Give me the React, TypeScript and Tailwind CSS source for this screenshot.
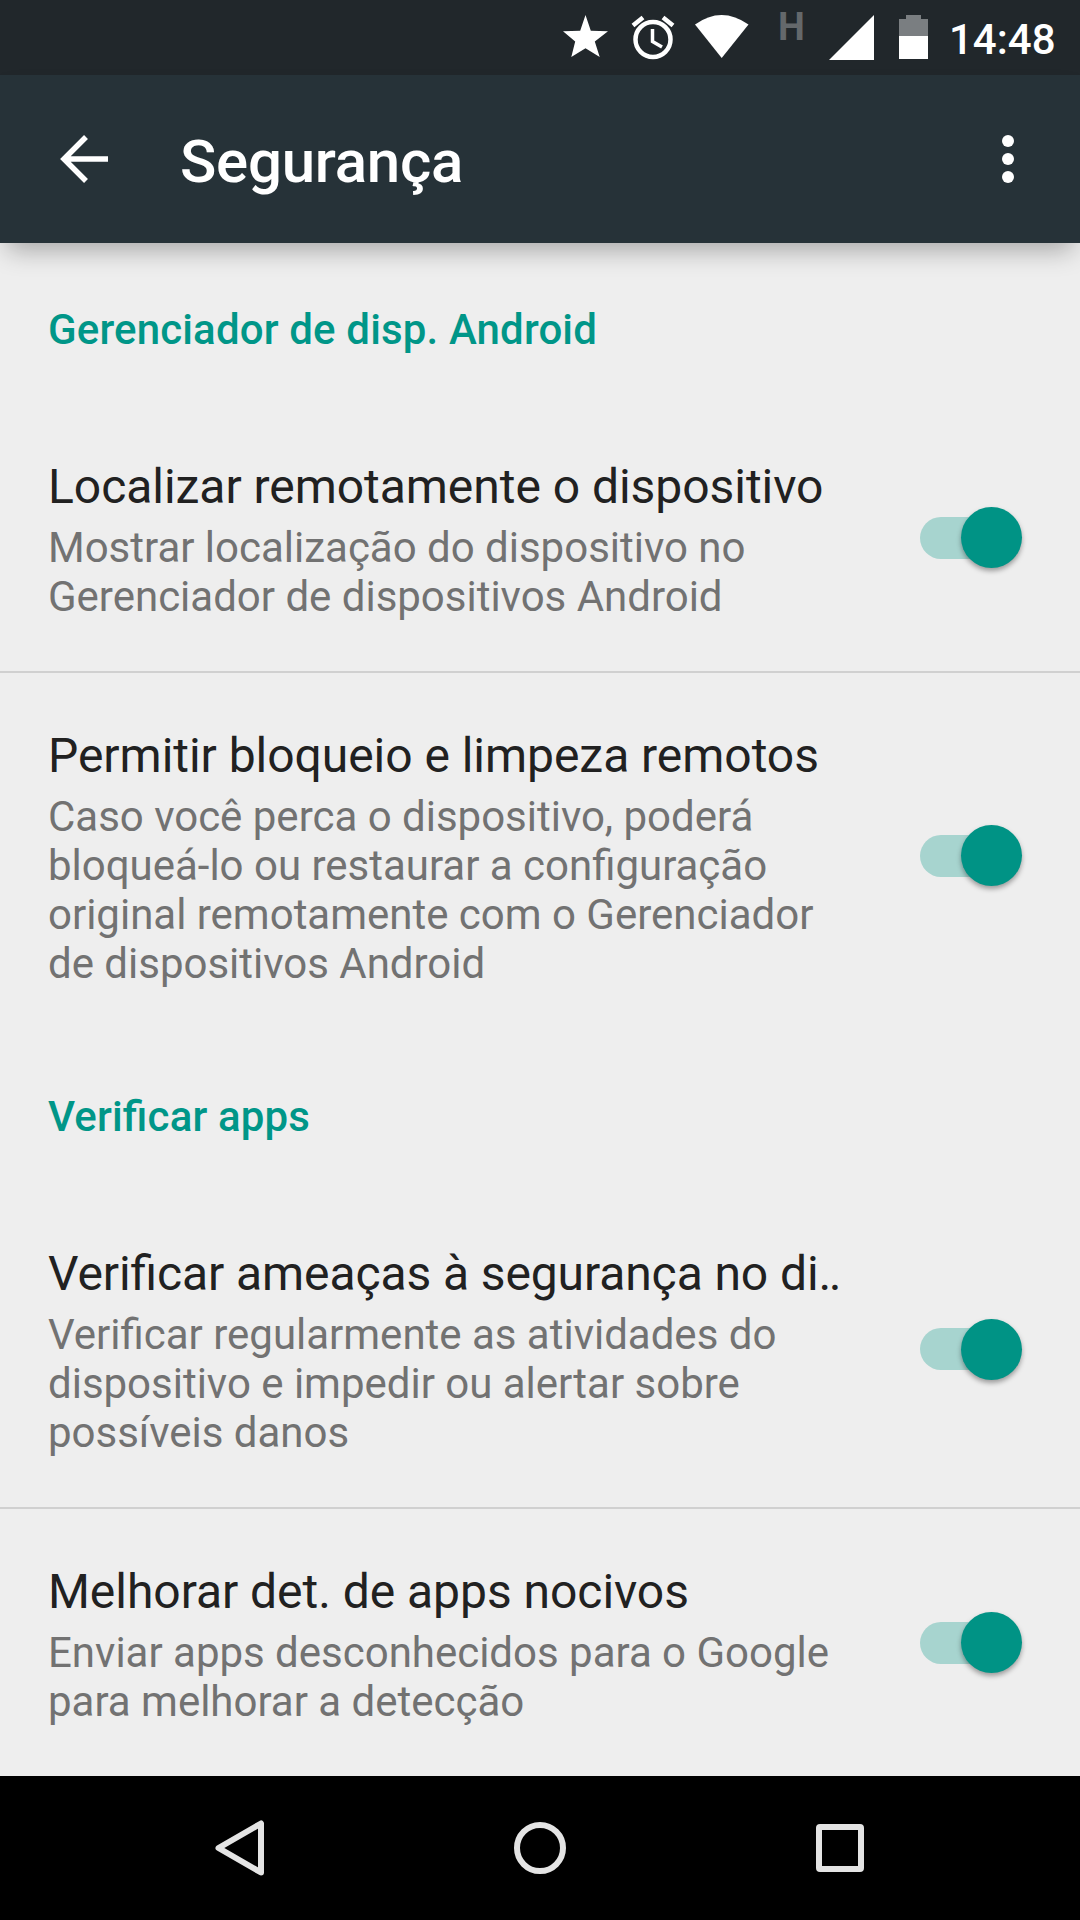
import type { ReactNode } from "react";
import clsx from "clsx";

type Setting = {
  title: string;
  summary: string[];
  tight?: boolean;
};

const deviceManager: Setting[] = [
  {
    title: "Localizar remotamente o dispositivo",
    summary: [
      "Mostrar localização do dispositivo no",
      "Gerenciador de dispositivos Android",
    ],
  },
  {
    title: "Permitir bloqueio e limpeza remotos",
    summary: [
      "Caso você perca o dispositivo, poderá",
      "bloqueá-lo ou restaurar a configuração",
      "original remotamente com o Gerenciador",
      "de dispositivos Android",
    ],
  },
];

const verifyApps: Setting[] = [
  {
    title: "Verificar ameaças à segurança no di‥",
    summary: [
      "Verificar regularmente as atividades do",
      "dispositivo e impedir ou alertar sobre",
      "possíveis danos",
    ],
    tight: true,
  },
  {
    title: "Melhorar det. de apps nocivos",
    summary: [
      "Enviar apps desconhecidos para o Google",
      "para melhorar a detecção",
    ],
  },
];

function StatusBar() {
  return (
    <div className="flex h-[75px] shrink-0 bg-[#21272b]">
      <svg width="1080" height="75" viewBox="0 0 1080 75" fill="#fff">
        <path d="M585.500 15l5.300 15.800 17.200.5-13.200 10.200 4.900 15.500-14.200-8.800-14.200 8.800 3.900-15.500-12.200-10.200 17.200-.5z" />
        <g fill="none" stroke="#fff">
          <circle cx="653" cy="39.500" r="17.500" strokeWidth="4.500" />
          <path d="M652.500 29v12.500l9.500 5.500" strokeWidth="3.500" />
          <path d="M633 25.500l10-8M673 25.500l-10-8" strokeWidth="4.500" />
        </g>
        <path d="M695 24.500q26.500-19 53.500 0l-26.800 33.500z" />
        <path d="M874 15v45h-45z" />
        <text x="778" y="40" fill="#64686b" fontFamily="Roboto" fontWeight="700" fontSize="38">H</text>
        <path fill="#7a7e81" d="M899 19h7v-4h15v4h7v17h-29z" />
        <path d="M899 36h29v23h-29z" />
        <text x="949" y="54" fontFamily="Roboto" fontWeight="500" fontSize="42">14:48</text>
      </svg>
    </div>
  );
}

function Toggle() {
  return (
    <div className="mb-0.5 flex h-[61px] w-[102px] shrink-0 items-center">
      <div className="flex h-[42px] w-[90px] items-center justify-end rounded-full bg-[#a7d4cf]">
        <div className="-mr-3 size-[61px] shrink-0 rounded-full bg-[#009385] shadow-[0_3px_5px_rgba(0,0,0,0.35)]" />
      </div>
    </div>
  );
}

function SettingRow({ title, summary, tight }: Setting) {
  return (
    <div className="flex items-center justify-between pt-[52px] pr-[58px] pb-[50px] pl-12">
      <div className="whitespace-nowrap">
        <p
          className={clsx(
            "text-[48px] leading-[62px] text-[#212121]",
            tight ? "tracking-[-0.1px]" : "tracking-[-0.04px]"
          )}
        >
          {title}
        </p>
        <div className="pt-[5px] text-[42px] leading-[49px] tracking-[-0.01px] text-[#727272]">
          {summary.map((line) => (
            <p key={line}>{line}</p>
          ))}
        </div>
      </div>
      <Toggle />
    </div>
  );
}

function Section({ name, children }: { name: string; children: ReactNode }) {
  return (
    <section>
      <h2 className="pl-12 text-[42px] leading-[49px] font-medium tracking-[0.15px] text-[#009688]">
        {name}
      </h2>
      <div className="divide-y-2 divide-[#d0d0d0] pt-[50px]">{children}</div>
    </section>
  );
}

export default function App() {
  return (
    <div className="flex h-[1920px] w-[1080px] flex-col overflow-hidden bg-[#eeeeee] font-['Roboto',sans-serif] [font-feature-settings:'liga'_1]">
      <StatusBar />
      <header className="flex h-[168px] shrink-0 items-center bg-[#263238] shadow-[0_14px_24px_-7px_rgba(0,0,0,0.3)]">
        <svg className="ml-[60px]" width="49" height="48" viewBox="0 0 49 48" fill="none" stroke="#fff" strokeWidth="5.500">
          <path d="M26 2L4 24l22 22M4 24h44" />
        </svg>
        <h1 className="ml-[71px] pt-[5px] text-[60px] font-medium tracking-[-0.25px] text-white">
          Segurança
        </h1>
        <svg className="mr-[66px] ml-auto" width="12" height="48" viewBox="0 0 12 48" fill="#fff">
          <circle cx="6" cy="6" r="6" />
          <circle cx="6" cy="24" r="6" />
          <circle cx="6" cy="42" r="6" />
        </svg>
      </header>
      <main className="flex flex-1 flex-col gap-[54px] pt-[62px]">
        <Section name="Gerenciador de disp. Android">
          {deviceManager.map((item) => (
            <SettingRow key={item.title} {...item} />
          ))}
        </Section>
        <Section name="Verificar apps">
          {verifyApps.map((item) => (
            <SettingRow key={item.title} {...item} />
          ))}
        </Section>
      </main>
      <nav className="h-36 shrink-0 bg-black">
        <svg width="1080" height="144" viewBox="0 0 1080 144" fill="none" stroke="#e4e4e4" strokeWidth="6" strokeLinejoin="round">
          <path d="M261 47.500v49l-42.500-24.500z" />
          <circle cx="540" cy="72" r="23" />
          <rect x="819" y="51" width="42" height="42" rx="1" />
        </svg>
      </nav>
    </div>
  );
}
